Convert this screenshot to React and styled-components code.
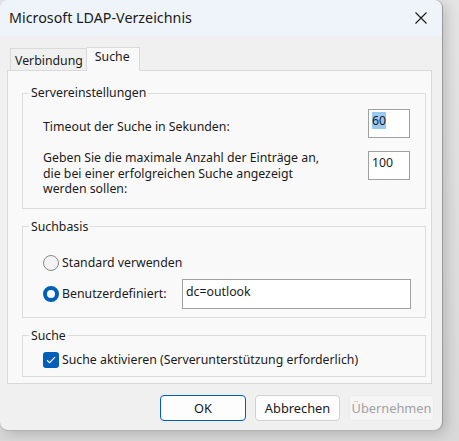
import styled, { createGlobalStyle } from 'styled-components';

const GlobalStyle = createGlobalStyle`
html, body {
  margin: 0;
  padding: 0;
  height: 100%;
}
body {
  background: linear-gradient(180deg, #e4e4e4 0%, #d9d9d9 100%);
  font-family: "Noto Sans", "Open Sans", sans-serif;
  font-size: 12.3px;
  color: #1a1a1a;
  overflow: hidden;
}
#root {
  height: 100%;
}
`;

const App = () => {
  return (
    <>
      <GlobalStyle />
      <Window>
        <TitleBar>
          <Title>Microsoft LDAP-Verzeichnis</Title>
          <CloseButton aria-label="Schließen">
            <svg width="12" height="12" viewBox="0 0 12 12">
              <path d="M0.5 0.5 L11.5 11.5 M11.5 0.5 L0.5 11.5" stroke="#1a1a1a" strokeWidth="1.1" fill="none" />
            </svg>
          </CloseButton>
        </TitleBar>

        <Body>
          <Tabs>
            <Tab>Verbindung</Tab>
            <Tab active>Suche</Tab>
          </Tabs>

          <Panel>
            <Group>
              <Legend>Servereinstellungen</Legend>
              <FieldRow>
                <Label offset={10}>Timeout der Suche in Sekunden:</Label>
                <NumberBox>
                  <Selected>60</Selected>
                </NumberBox>
              </FieldRow>
              <FieldRow>
                <Label offset={-1}>
                  Geben Sie die maximale Anzahl der Einträge an,<br />
                  die bei einer erfolgreichen Suche angezeigt<br />
                  werden sollen:
                </Label>
                <NumberBox>100</NumberBox>
              </FieldRow>
            </Group>

            <Group pad="13px 14px 8px 20px">
              <Legend>Suchbasis</Legend>
              <OptionRow>
                <Radio />
                <OptionText>Standard verwenden</OptionText>
              </OptionRow>
              <OptionRow>
                <Radio checked />
                <OptionText>Benutzerdefiniert:</OptionText>
                <TextBox>dc=outlook</TextBox>
              </OptionRow>
            </Group>

            <Group pad="8px 14px 8px 20px">
              <Legend>Suche</Legend>
              <CheckRow>
                <CheckBox>
                  <svg width="10" height="8" viewBox="0 0 10 8">
                    <path d="M1 4.2 L3.6 6.6 L9 1.2" stroke="#fff" strokeWidth="1.2" fill="none" />
                  </svg>
                </CheckBox>
                <OptionText>Suche aktivieren (Serverunterstützung erforderlich)</OptionText>
              </CheckRow>
            </Group>
          </Panel>

          <Footer>
            <Button primary>OK</Button>
            <Button>Abbrechen</Button>
            <Button disabled>Übernehmen</Button>
          </Footer>
        </Body>
      </Window>
    </>
  );
};

const Window = styled.div`
width: 442px;
height: 430px;
background: #f0f0f0;
border-radius: 8px;
box-shadow: 1px 0 0 #9a9a9a, 0 1px 0 #b4b4b4, 4px 4px 14px rgba(0, 0, 0, 0.18);
display: flex;
flex-direction: column;
overflow: hidden;
`;

const TitleBar = styled.div`
height: 36px;
flex: none;
background: #eef4f9;
display: flex;
align-items: center;
justify-content: space-between;
padding: 0 15px 0 9px;
`;

const Title = styled.div`
font-size: 14.3px;
color: #1a1a1a;
margin-top: -1px;
`;

const CloseButton = styled.div`
width: 12px;
height: 12px;
display: flex;
`;

const Body = styled.div`
flex: 1;
display: flex;
flex-direction: column;
padding: 11px 10px 0 7px;
`;

const Tabs = styled.div`
display: flex;
align-items: flex-end;
padding-left: 3px;
height: 24px;
margin-bottom: -1px;
position: relative;
z-index: 1;
`;

const Tab = styled.div`
height: ${(p) => (p.active ? '24px' : '23px')};
box-sizing: border-box;
padding: ${(p) => (p.active ? '0 9px 4px 8px' : '2px 3px 0 4px')};
display: flex;
align-items: center;
border: 1px solid #d9d9d9;
border-bottom: 1px solid ${(p) => (p.active ? '#f9f9f9' : '#d9d9d9')};
border-left: ${(p) => (p.active ? 'none' : '1px solid #d9d9d9')};
background: ${(p) => (p.active ? '#f9f9f9' : '#f0f0f0')};
line-height: 16px;
color: #1a1a1a;
`;

const Panel = styled.div`
height: 314px;
box-sizing: border-box;
background: #f9f9f9;
border: 1px solid #d9d9d9;
padding: 14px 5px 9px 14px;
display: flex;
flex-direction: column;
gap: 10px;
`;

const Group = styled.fieldset`
margin: 0;
border: 1px solid #dcdcdc;
padding: ${(p) => p.pad || '8px 15px 11px 20px'};
display: flex;
flex-direction: column;
gap: ${(p) => (p.pad ? '1px' : '13px')};
min-width: 0;
`;

const Legend = styled.legend`
padding: 0 2px;
margin-left: -14px;
line-height: 16px;
color: #1a1a1a;
`;

const FieldRow = styled.div`
display: flex;
justify-content: space-between;
align-items: flex-start;
`;

const Label = styled.div`
margin-top: ${(p) => p.offset}px;
line-height: 15.5px;
`;

const NumberBox = styled.div`
width: 42px;
height: 29px;
box-sizing: border-box;
background: #fff;
border: 1px solid #a0a0a0;
padding: 3px 0 0 3px;
line-height: 16px;
`;

const Selected = styled.span`
background: #99c9ef;
`;

const OptionRow = styled.div`
height: 30px;
display: flex;
align-items: center;
`;

const Radio = styled.span`
width: 16px;
height: 16px;
box-sizing: border-box;
border-radius: 50%;
flex: none;
background: ${(p) => (p.checked ? '#fff' : '#f3f3f3')};
border: ${(p) => (p.checked ? '4.5px solid #005fb8' : '1px solid #8a8a8a')};
`;

const OptionText = styled.span`
margin-left: 3px;
line-height: 16px;
`;

const TextBox = styled.div`
margin-left: auto;
width: 229px;
height: 30px;
box-sizing: border-box;
background: #fff;
border: 1px solid #a0a0a0;
padding: 4px 0 0 3px;
line-height: 16px;
`;

const CheckRow = styled.div`
display: flex;
align-items: center;
height: 16px;
`;

const CheckBox = styled.span`
width: 16px;
height: 16px;
border-radius: 3px;
background: #005fb8;
display: flex;
align-items: center;
justify-content: center;
flex: none;
`;

const Footer = styled.div`
display: flex;
justify-content: flex-end;
gap: 9px;
padding: 11px 0 0 0;
margin-right: -2px;
`;

const Button = styled.div`
width: ${(p) => (p.primary ? '86px' : '85px')};
height: 26px;
box-sizing: border-box;
border-radius: 4px;
display: flex;
align-items: center;
justify-content: center;
font-size: 12.8px;
background: ${(p) => (p.disabled ? '#f5f5f5' : '#fdfdfd')};
border: 1px solid ${(p) => (p.primary ? '#005fb8' : p.disabled ? '#ececec' : '#d0d0d0')};
color: ${(p) => (p.disabled ? '#a2a2a2' : '#1a1a1a')};
`;

export default App;
